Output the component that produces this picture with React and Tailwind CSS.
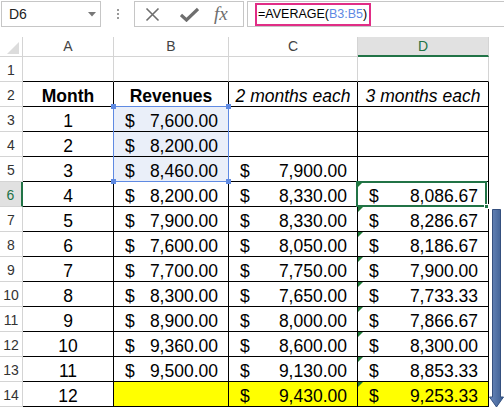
import React from "react";

const ROWS = [
  [3, "1", "7,600.00", "", ""],
  [4, "2", "8,200.00", "", ""],
  [5, "3", "8,460.00", "7,900.00", ""],
  [6, "4", "8,200.00", "8,330.00", "8,086.67"],
  [7, "5", "7,900.00", "8,330.00", "8,286.67"],
  [8, "6", "7,600.00", "8,050.00", "8,186.67"],
  [9, "7", "7,700.00", "7,750.00", "7,900.00"],
  [10, "8", "8,300.00", "7,650.00", "7,733.33"],
  [11, "9", "8,900.00", "8,000.00", "7,866.67"],
  [12, "10", "9,360.00", "8,600.00", "8,300.00"],
  [13, "11", "9,500.00", "9,130.00", "8,853.33"],
  [14, "12", "", "9,430.00", "9,253.33"],
];

const cell = "h-[25px] border-b border-r border-black flex items-center pt-[4px] text-[17.5px] text-black";

function Money({ value }) {
  if (!value) return null;
  return (
    <div className="flex w-full justify-between pl-[11px] pr-[10px]">
      <span>$</span>
      <span>{value}</span>
    </div>
  );
}

function FormulaBar() {
  return (
    <div className="h-[37px] flex items-start pt-[1px] text-[14px]">
      {/* name box */}
      <div className="ml-[1px] w-[100px] h-[26px] border border-[#c6c6c6] flex items-center justify-between pl-[7px] pr-[4px] text-[#222]">
        <span>D6</span>
        <svg width="8" height="5" viewBox="0 0 8 5">
          <path d="M0 0 L8 0 L4 4.5 Z" fill="#777" />
        </svg>
      </div>
      {/* splitter dots */}
      <div className="w-[33px] h-[26px] flex flex-col items-center justify-center gap-[2px]">
        <span className="w-[2px] h-[2px] bg-[#9a9a9a]" />
        <span className="w-[2px] h-[2px] bg-[#9a9a9a]" />
        <span className="w-[2px] h-[2px] bg-[#9a9a9a]" />
      </div>
      {/* cancel / enter / fx */}
      <div className="w-[110px] h-[26px] border border-[#c6c6c6] flex items-center pl-[10px]">
        <svg width="15" height="15" viewBox="0 0 15 15">
          <path d="M1.5 1.5 L13.5 13.5 M13.5 1.5 L1.5 13.5" stroke="#6e6e6e" strokeWidth="1.6" />
        </svg>
        <svg width="19" height="15" viewBox="0 0 19 15" className="ml-[20px]">
          <path d="M1 8 L6.5 13 L18 2" stroke="#6e6e6e" strokeWidth="3.2" fill="none" />
        </svg>
        <span className="ml-[15px] text-[19px] italic text-[#6e6e6e] font-['Liberation_Serif',serif] leading-none pb-[2px]">
          fx
        </span>
      </div>
      {/* formula box */}
      <div className="ml-[3px] flex-1 h-[26px] border-y border-l border-[#c6c6c6] flex items-center pl-[7px]">
        <div className="h-[23px] w-[116px] border-2 border-[#e12d86] flex items-center pl-[1px] text-[12.5px] text-black">
          <span>=AVERAGE(</span>
          <span className="text-[#5d88e3]">B3:B5</span>
          <span>)</span>
        </div>
      </div>
    </div>
  );
}

function Sheet() {
  return (
    <div className="grid grid-cols-[23px_91px_115px_129px_131px] w-[489px]">
      {/* column headers */}
      <div className="h-[20px] border-r border-b border-[#d4d4d4] flex items-end justify-end pr-[3px] pb-[2px]">
        <svg width="12" height="12" viewBox="0 0 12 12">
          <path d="M12 0 L12 12 L0 12 Z" fill="#dcdcdc" />
        </svg>
      </div>
      {["A", "B", "C"].map((c) => (
        <div key={c} className="h-[20px] border-r border-b border-[#d4d4d4] flex items-center justify-center text-[14px] text-[#444]">
          {c}
        </div>
      ))}
      <div className="h-[20px] border-r border-[#d4d4d4] border-b-2 border-b-[#217346] bg-[#e1e1e1] flex items-center justify-center text-[14px] text-[#217346]">
        D
      </div>

      {/* row 1 */}
      <div className="h-[25px] border-r border-b border-[#d4d4d4] flex items-center justify-center pt-[2px] text-[14px] text-[#333]">1</div>
      <div className="h-[25px] border-r border-[#d4d4d4] border-b border-b-black" />
      <div className="h-[25px] border-r border-[#d4d4d4] border-b border-b-black" />
      <div className="h-[25px] border-r border-[#d4d4d4] border-b border-b-black" />
      <div className="h-[25px] border-r border-[#d4d4d4] border-b border-b-black" />

      {/* row 2 */}
      <div className="h-[25px] border-r border-b border-[#d4d4d4] flex items-center justify-center pt-[2px] text-[14px] text-[#333]">2</div>
      <div className={`${cell} justify-center font-bold`}>Month</div>
      <div className={`${cell} justify-center font-bold`}>Revenues</div>
      <div className={`${cell} justify-center italic`}>2 months each</div>
      <div className={`${cell} justify-center italic`}>3 months each</div>

      {ROWS.map(([r, m, b, c, d]) => {
        const active = r === 6;
        const sel = r >= 3 && r <= 5;
        const last = r === 14;
        return (
          <React.Fragment key={r}>
            {active ? (
              <div className="h-[25px] border-r-2 border-r-[#217346] border-b border-[#d4d4d4] bg-[#e1e1e1] flex items-center justify-center pt-[2px] text-[14px] text-[#217346]">
                {r}
              </div>
            ) : (
              <div className="h-[25px] border-r border-b border-[#d4d4d4] flex items-center justify-center pt-[2px] text-[14px] text-[#333]">
                {r}
              </div>
            )}
            <div className={`${cell} justify-center`}>{m}</div>
            <div className={`${cell} relative ${sel ? "bg-[#eaeff9]" : ""} ${last ? "bg-[#ffff00]" : ""}`}>
              <Money value={b} />
              {r === 3 && (
                <div className="absolute -left-px -top-px w-[116px] h-[76px] border border-[#5f8ae2] z-10">
                  <span className="absolute -left-[3px] -top-[3px] w-[5px] h-[5px] bg-[#5f8ae2]" />
                  <span className="absolute -right-[3px] -top-[3px] w-[5px] h-[5px] bg-[#5f8ae2]" />
                  <span className="absolute -left-[3px] -bottom-[3px] w-[5px] h-[5px] bg-[#5f8ae2]" />
                  <span className="absolute -right-[3px] -bottom-[3px] w-[5px] h-[5px] bg-[#5f8ae2]" />
                </div>
              )}
            </div>
            <div className={`${cell} ${last ? "bg-[#ffff00]" : ""}`}>
              <Money value={c} />
            </div>
            <div className={`${cell} relative ${last ? "bg-[#ffff00]" : ""}`}>
              <Money value={d} />
              {d && (
                <svg width="5" height="5" viewBox="0 0 5 5" className="absolute left-0 top-0">
                  <path d="M0 0 L5 0 L0 5 Z" fill="#1f7a37" />
                </svg>
              )}
              {active && (
                <div className="absolute -left-[2px] -top-px w-[131px] h-[26px] border-2 border-[#217346] z-10">
                  <span className="absolute -right-[4px] -bottom-[4px] w-[5px] h-[5px] bg-[#217346] border border-white" />
                </div>
              )}
            </div>
          </React.Fragment>
        );
      })}
    </div>
  );
}

export default function App() {
  return (
    <div className="relative w-[504px] h-[409px] overflow-hidden bg-white font-['Liberation_Sans',Arial,sans-serif]">
      <FormulaBar />
      <Sheet />
      {/* fill-down arrow */}
      <svg width="15" height="200" viewBox="0 0 15 200" className="absolute left-[489px] top-[209px]">
        <defs>
          <linearGradient id="shaft" x1="0" x2="1" y1="0" y2="0">
            <stop offset="0" stopColor="#6a89bd" />
            <stop offset="1" stopColor="#3a5b8f" />
          </linearGradient>
        </defs>
        <path
          d="M3.5 0.5 L11.5 0.5 L11.5 188 L14.5 188 L7.5 198 L0.5 188 L3.5 188 Z"
          fill="url(#shaft)"
          stroke="#35507f"
          strokeWidth="1"
        />
      </svg>
    </div>
  );
}
